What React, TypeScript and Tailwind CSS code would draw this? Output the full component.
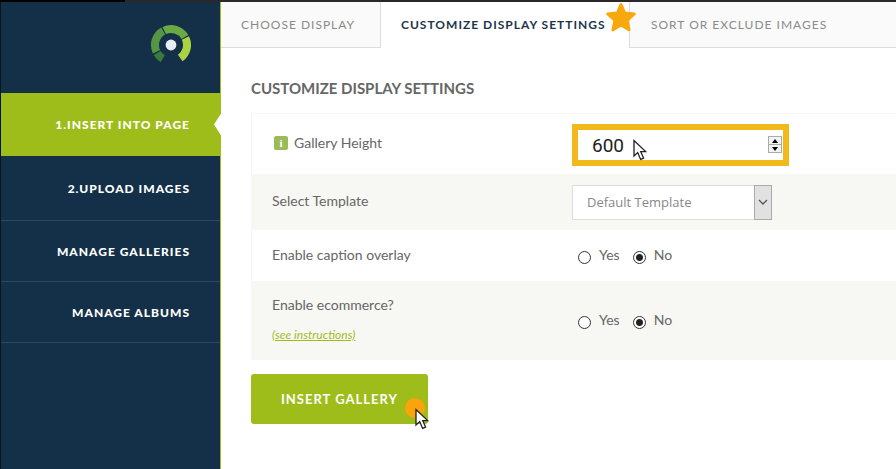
import { useState } from "react";

const menu = ["1.INSERT INTO PAGE", "2.UPLOAD IMAGES", "MANAGE GALLERIES", "MANAGE ALBUMS"];

function Logo() {
  return (
    <svg viewBox="0 0 42 42" className="h-[42px] w-[42px]" fill="none" strokeWidth="8" aria-label="Logo">
      <path d="M12.7 34.7A16 16 0 0 1 7.1 29" stroke="#3a7a3a" />
      <path d="M6.5 27.8A16 16 0 0 1 13.2 7" stroke="#559645" />
      <path d="M14.2 6.5A16 16 0 0 1 34.9 13" stroke="#6aaa42" />
      <path d="M35.4 14A16 16 0 0 1 30.2 34.1" stroke="#a9d343" />
      <circle cx="21" cy="21" r="5.4" fill="#e8eef3" />
    </svg>
  );
}

function Pointer({ className }: { className: string }) {
  return (
    <svg viewBox="0 0 14 22" className={`pointer-events-none absolute h-[22px] w-[14px] ${className}`} aria-hidden="true">
      <path d="M1 1.5V17l3.7-3.4 2.9 6.8 3-1.3-2.9-6.5h5z" fill="#fff" stroke="#222" strokeWidth="1.3" />
    </svg>
  );
}

function YesNo({ name, label }: { name: string; label: string }) {
  const [value, setValue] = useState("No");
  return (
    <div role="radiogroup" aria-label={label} className="flex gap-[13px] pb-[2px] pl-[6px]">
      {["Yes", "No"].map((option) => (
        <label key={option} className="flex items-center gap-[8px]">
          <input
            type="radio"
            name={name}
            checked={value === option}
            onChange={() => setValue(option)}
            className="mt-[6px] h-[13px] w-[13px] appearance-none rounded-full border border-[#333] bg-white checked:bg-[radial-gradient(circle,#222_0,#222_3px,#fff_4px)]"
          />
          {option}
        </label>
      ))}
    </div>
  );
}

export default function App() {
  const [height, setHeight] = useState(600);
  const row = "grid grid-cols-[300px_1fr] items-center pl-[20px]";
  return (
    <div className="flex min-h-screen flex-col bg-white font-['Lato',sans-serif] text-[14px] leading-[20px] text-[#666]">
      <div className="flex h-[2px]">
        <div className="w-[125px] bg-black" />
        <div className="flex-1 bg-[#2b2829]" />
      </div>
      <div className="flex flex-1">
        <aside className="w-[221px] shrink-0 border-r border-l border-r-[#a0bd1c] border-l-[#07131f] bg-[#143048]">
          <div className="flex h-[91px] justify-end pt-[22px] pr-[28px]">
            <Logo />
          </div>
          <nav className="text-right text-[12px] font-black tracking-[1px] text-white">
            {menu.map((item, i) => (
              <a
                key={item}
                href="#"
                className={
                  i === 0
                    ? "relative flex h-[63px] items-center justify-end bg-[#9ebd1a] pr-[30px]"
                    : i === 1
                      ? "flex h-[65px] items-center justify-end border-b border-[#2d475c] pt-[2px] pr-[30px]"
                      : "flex h-[61px] items-center justify-end border-b border-[#2d475c] pt-[2px] pr-[30px]"
                }
              >
                {item}
                {i === 0 && (
                  <span className="absolute top-1/2 -right-px h-[22px] w-[7px] -translate-y-1/2 bg-white [clip-path:polygon(100%_0,0_50%,100%_100%)]" />
                )}
              </a>
            ))}
          </nav>
        </aside>
        <main className="min-w-0 flex-1">
          <div role="tablist" className="flex h-[46px] text-[12px] whitespace-nowrap">
            <button role="tab" aria-selected="false" className="w-[160px] border-r border-b border-[#ddd] bg-[#fafafa] pl-[20px] text-left tracking-[1px] text-[#8b8b8b]">
              CHOOSE DISPLAY
            </button>
            <button role="tab" aria-selected="true" className="relative w-[248px] pl-[20px] text-left font-bold tracking-[1px] text-[#1d3549]">
              CUSTOMIZE DISPLAY SETTINGS
              <svg viewBox="0 0 34 34" className="absolute top-0 right-[-8px] h-[32px] w-[32px]" aria-hidden="true">
                <path
                  d="M17 2.5l4 9.2 10.2.9-7.7 6.9 2.2 10.2L17 24.6l-8.7 5.1 2.2-10.2-7.7-6.9 10.2-.9z"
                  fill="#f7a80d"
                  stroke="#f7a80d"
                  strokeWidth="3"
                  strokeLinejoin="round"
                />
              </svg>
            </button>
            <button role="tab" aria-selected="false" className="flex-1 border-b border-l border-[#ddd] bg-[#fafafa] pl-[21px] text-left tracking-[1px] text-[#8b8b8b]">
              SORT OR EXCLUDE IMAGES
            </button>
          </div>
          <form className="pt-[30px] pl-[30px]" onSubmit={(e) => e.preventDefault()}>
            <h1 className="text-[15px] font-bold">CUSTOMIZE DISPLAY SETTINGS</h1>
            <div className="mt-[15px] border-t border-l border-[#f6f6f6]">
              <div className={`${row} h-[60px]`}>
                <label htmlFor="height" className="flex items-center gap-[6px] pb-[2px] pl-[2px]">
                  <span className="flex h-[14px] w-[14px] items-center justify-center rounded-[2px] bg-[#9bbb5b] font-['Liberation_Serif',serif] text-[11px] font-bold text-white">
                    i
                  </span>
                  Gallery Height
                </label>
                <div className="relative mt-[2px] w-[217px]">
                  <input
                    id="height"
                    type="number"
                    value={height}
                    onChange={(e) => setHeight(Number(e.target.value))}
                    className="block h-[42px] w-full border-[6px] border-[#f2b91d] bg-white pl-[14px] font-['Roboto',sans-serif] text-[19px] text-[#222] [appearance:textfield]"
                  />
                  <div className="absolute top-[12px] right-[7px] flex h-[17px] w-[14px] flex-col border border-[#aaa] bg-[#f2f2f2]">
                    <button type="button" aria-label="Increase" onClick={() => setHeight(height + 1)} className="flex flex-1 items-center justify-center border-b border-[#aaa]">
                      <svg viewBox="0 0 6 4" className="h-[4px] w-[6px]"><path d="M3 0L6 4H0z" /></svg>
                    </button>
                    <button type="button" aria-label="Decrease" onClick={() => setHeight(height - 1)} className="flex flex-1 items-center justify-center">
                      <svg viewBox="0 0 6 4" className="h-[4px] w-[6px]"><path d="M3 4L6 0H0z" /></svg>
                    </button>
                  </div>
                  <Pointer className="top-[15px] left-[61px]" />
                </div>
              </div>
              <div className={`${row} h-[56px] bg-[#f7f7f3]`}>
                <label htmlFor="template" className="pb-[2px]">Select Template</label>
                <div className="relative w-[200px]">
                  <select id="template" className="block h-[35px] w-full appearance-none border border-[#ddd] bg-white pl-[14px] font-['Open_Sans',sans-serif] text-[13px] text-[#888]">
                    <option>Default Template</option>
                  </select>
                  <span className="pointer-events-none absolute top-0 right-0 flex h-[35px] w-[18px] items-center justify-center border border-[#aaa] bg-[#e1e1e1]">
                    <svg viewBox="0 0 10 6" className="h-[6px] w-[10px]" fill="none" stroke="#555" strokeWidth="1.3"><path d="M1 1l4 4 4-4" /></svg>
                  </span>
                </div>
              </div>
              <div className={`${row} h-[51px]`}>
                <span className="pb-[2px]">Enable caption overlay</span>
                <YesNo name="caption" label="Enable caption overlay" />
              </div>
              <div className={`${row} h-[79px] bg-[#f7f7f3]`}>
                <div className="pb-[2px]">
                  <div>Enable ecommerce?</div>
                  <a href="#" className="mt-[10px] block text-[12px] text-[#9ebd1a] italic underline">(see instructions)</a>
                </div>
                <YesNo name="ecommerce" label="Enable ecommerce?" />
              </div>
            </div>
            <button type="submit" className="relative mt-[14px] h-[50px] w-[177px] rounded-[3px] bg-[#9ebd1a] pl-[30px] text-left text-[13px] font-bold tracking-[1px] text-white">
              INSERT GALLERY
              <span className="absolute right-[3px] bottom-[6px] h-[20px] w-[20px] rounded-full bg-[#fba30a]" />
              <Pointer className="right-[-1px] bottom-[-6px]" />
            </button>
          </form>
        </main>
      </div>
    </div>
  );
}
